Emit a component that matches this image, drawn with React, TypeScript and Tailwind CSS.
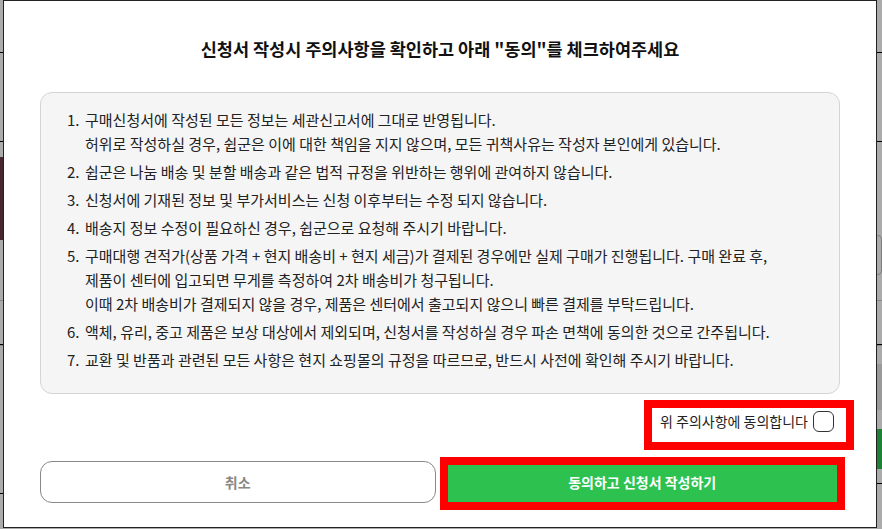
const notices: [string, string[]][] = [
  ["1.", ["구매신청서에 작성된 모든 정보는 세관신고서에 그대로 반영됩니다.", "허위로 작성하실 경우, 쉽군은 이에 대한 책임을 지지 않으며, 모든 귀책사유는 작성자 본인에게 있습니다."]],
  ["2.", ["쉽군은 나눔 배송 및 분할 배송과 같은 법적 규정을 위반하는 행위에 관여하지 않습니다."]],
  ["3.", ["신청서에 기재된 정보 및 부가서비스는 신청 이후부터는 수정 되지 않습니다."]],
  ["4.", ["배송지 정보 수정이 필요하신 경우, 쉽군으로 요청해 주시기 바랍니다."]],
  [
    "5.",
    [
      "구매대행 견적가(상품 가격 + 현지 배송비 + 현지 세금)가 결제된 경우에만 실제 구매가 진행됩니다. 구매 완료 후,",
      "제품이 센터에 입고되면 무게를 측정하여 2차 배송비가 청구됩니다.",
      "이때 2차 배송비가 결제되지 않을 경우, 제품은 센터에서 출고되지 않으니 빠른 결제를 부탁드립니다.",
    ],
  ],
  ["6.", ["액체, 유리, 중고 제품은 보상 대상에서 제외되며, 신청서를 작성하실 경우 파손 면책에 동의한 것으로 간주됩니다."]],
  ["7.", ["교환 및 반품과 관련된 모든 사항은 현지 쇼핑몰의 규정을 따르므로, 반드시 사전에 확인해 주시기 바랍니다."]],
];

function BackgroundPage() {
  return (
    <div className="flex flex-col w-full h-[529px] bg-white">
      <div className="h-[53px] border-b border-black shrink-0" />
      <div className="h-[89px] border-b border-black shrink-0" />
      <div className="h-[159px] border-b border-[#ccc] shrink-0 flex justify-between pt-[15px]">
        <div className="w-[6px] h-[83px] bg-[#6b3a44]" />
        <div className="w-[8px] h-[40px] mt-[78px] rounded-full border border-[#bbb]" />
      </div>
      <div className="h-[44px] border-b border-black shrink-0" />
      <div className="flex-1 flex justify-between">
        <div className="w-[6px] h-[149px] border-t border-[#ccc] border-b border-b-black" />
        <div className="w-[8px] flex flex-col">
          <div className="h-[10px] border-t border-[#ccc]" />
          <div className="h-[46px] mt-[9px] bg-[#e6e6e6]" />
          <div className="h-[40px] mt-[19px] bg-[#2dc250]" />
          <div className="h-[15px] border-b border-black" />
        </div>
      </div>
    </div>
  );
}

export default function App() {
  return (
    <div className="relative w-[882px] h-[529px] overflow-hidden font-['Noto_Sans_CJK_KR','Noto_Sans',sans-serif]">
      <BackgroundPage />
      <div className="absolute inset-0 bg-black/[0.33]" />

      <div className="absolute left-[3px] top-0 w-[874px] h-[528px] bg-white border border-[#222] px-9 pt-[35px] pb-6 flex flex-col">
        <h2 className="text-center text-[17.5px] leading-[26px] font-bold text-[#111]">
          신청서 작성시 주의사항을 확인하고 아래 "동의"를 체크하여주세요
        </h2>

        <div className="mt-[30px] h-[302px] rounded-xl border border-[#d4d4d4] bg-[#f5f5f5] pl-[26px] pr-4 pt-[15px]">
          <ol className="flex flex-col gap-1 text-[15px] leading-6 text-[#222]">
            {notices.map(([num, lines]) => (
              <li key={num} className="flex">
                <span className="w-[18px] shrink-0">{num}</span>
                <div className="flex flex-col">
                  {lines.map((line) => (
                    <span key={line} className="whitespace-nowrap">{line}</span>
                  ))}
                </div>
              </li>
            ))}
          </ol>
        </div>

        <label className="mt-[17px] h-[21px] flex items-center justify-end gap-[5px] pr-[6px] text-[14px] text-[#222]">
          <span>위 주의사항에 동의합니다</span>
          <span className="w-[21px] h-[21px] rounded-[6px] border border-[#333] bg-white" />
        </label>

        <div className="mt-[29px] grid grid-cols-2 gap-[9px]">
          <button className="h-[42px] rounded-xl border border-[#888] bg-white text-[14px] font-bold text-[#888]">
            취소
          </button>
          <button className="h-[42px] rounded-md bg-[#2dc250] text-[14px] font-bold text-white">
            동의하고 신청서 작성하기
          </button>
        </div>

        <div className="absolute left-[640px] top-[399px] w-[210px] h-[50px] border-8 border-[#ff0000]" />
        <div className="absolute left-[436px] top-[456px] w-[405px] h-[53px] border-8 border-[#ff0000]" />
      </div>
    </div>
  );
}
